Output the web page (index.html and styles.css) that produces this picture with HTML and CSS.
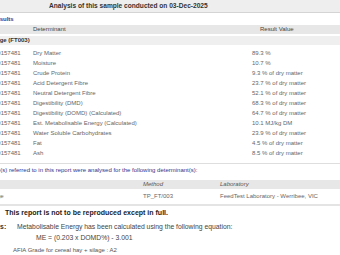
FILE: index.html
```html
<!DOCTYPE html>
<html>
<head>
<meta charset="utf-8">
<link rel="stylesheet" href="styles.css">
</head>
<body>
<div class="page">
  <div class="topbar">Analysis of this sample conducted on 03-Dec-2025</div>
  <div class="title">Results</div>
  <table class="results">
    <colgroup><col class="c-id"><col class="c-det"><col class="c-val"></colgroup>
    <thead>
      <tr><th></th><th>Determinant</th><th class="h-val">Result Value</th></tr>
    </thead>
    <tbody>
      <tr class="group"><td colspan="3">Silage (FT003)</td></tr>
      <tr><td>20157481</td><td>Dry Matter</td><td>89.3 %</td></tr>
      <tr><td>20157481</td><td>Moisture</td><td>10.7 %</td></tr>
      <tr><td>20157481</td><td>Crude Protein</td><td>9.3 % of dry matter</td></tr>
      <tr><td>20157481</td><td>Acid Detergent Fibre</td><td>23.7 % of dry matter</td></tr>
      <tr><td>20157481</td><td>Neutral Detergent Fibre</td><td>52.1 % of dry matter</td></tr>
      <tr><td>20157481</td><td>Digestibility (DMD)</td><td>68.3 % of dry matter</td></tr>
      <tr><td>20157481</td><td>Digestibility (DOMD) (Calculated)</td><td>64.7 % of dry matter</td></tr>
      <tr><td>20157481</td><td>Est. Metabolisable Energy (Calculated)</td><td>10.1 MJ/kg DM</td></tr>
      <tr><td>20157481</td><td>Water Soluble Carbohydrates</td><td>23.9 % of dry matter</td></tr>
      <tr><td>20157481</td><td>Fat</td><td>4.5 % of dry matter</td></tr>
      <tr><td>20157481</td><td>Ash</td><td>8.5 % of dry matter</td></tr>
    </tbody>
  </table>
  <div class="sep"></div>
  <p class="intro">Sample(s) referred to in this report were analysed for the following determinant(s):</p>
  <table class="methods">
    <colgroup><col class="m-name"><col class="m-method"><col class="m-lab"></colgroup>
    <thead>
      <tr><th></th><th>Method</th><th>Laboratory</th></tr>
    </thead>
    <tbody>
      <tr><td>Silage</td><td>TP_FT/003</td><td>FeedTest Laboratory - Werribee, VIC</td></tr>
    </tbody>
  </table>
  <p class="disclaimer">This report is not to be reproduced except in full.</p>
  <div class="notes">
    <div class="notes-label">Notes:</div>
    <div class="notes-body">
      <div>Metabolisable Energy has been calculated using the following equation:</div>
      <div class="eq">ME = (0.203 x DOMD%) - 3.001</div>
    </div>
  </div>
  <p class="grade">AFIA Grade for cereal hay + silage : A2</p>
</div>
</body>
</html>
```

FILE: styles.css
```css
html, body {
  margin: 0;
  padding: 0;
}
body {
  font-family: "Liberation Sans", Arial, sans-serif;
  background: #ffffff;
  color: #555;
  width: 340px;
  height: 255px;
  overflow: hidden;
}
.page {
  width: 340px;
}
.topbar {
  height: 12px;
  line-height: 12px;
  background: #eeeeee;
  border-bottom: 1px solid #d4d4d4;
  font-size: 6.6px;
  font-weight: bold;
  color: #333;
  padding-left: 49px;
  white-space: nowrap;
}
.title {
  margin-left: -8px;
  font-size: 6px;
  font-weight: bold;
  line-height: 12px;
  color: #3b3b8e;
}
.results {
  border-collapse: separate;
  border-spacing: 0;
  margin-left: -6px;
  width: 346px;
  font-size: 6px;
  table-layout: fixed;
}
.c-id { width: 39px; }
.c-det { width: 219px; }
.c-val { width: 88px; }
.results th {
  background: #e7e7e7;
  height: 9px;
  line-height: 9px;
  padding: 0;
  font-weight: normal;
  color: #444;
  text-align: left;
}
.results th.h-val {
  padding-left: 8px;
}
.results td {
  padding: 0;
  height: 10px;
  line-height: 10px;
  color: #666;
  white-space: nowrap;
}
.results tr.group td {
  background: #efefef;
  height: 9px;
  line-height: 9px;
  border-top: 2px solid #fff;
  border-bottom: 3px solid #fff;
  font-weight: bold;
  color: #333;
  text-indent: -5px;
}
.sep {
  margin-top: 5px;
  border-top: 1px solid #dedede;
}
.intro {
  margin: 0 0 5px -20px;
  padding-top: 1px;
  font-size: 6px;
  line-height: 10px;
  color: #34348a;
  white-space: nowrap;
}
.methods {
  border-collapse: separate;
  border-spacing: 0;
  margin-left: -13px;
  width: 353px;
  font-size: 6px;
  table-layout: fixed;
}
.m-name { width: 156px; }
.m-method { width: 77px; }
.m-lab { width: 120px; }
.methods th {
  background: #e7e7e7;
  height: 9px;
  line-height: 9px;
  padding: 0;
  font-weight: normal;
  font-style: italic;
  color: #555;
  text-align: left;
}
.methods td {
  padding: 0;
  height: 15px;
  line-height: 15px;
  color: #666;
  border-bottom: 2px solid #e4e4e4;
  white-space: nowrap;
}
.disclaimer {
  margin: 2px 0 0 0;
  padding-left: 5px;
  font-size: 7px;
  font-weight: bold;
  line-height: 10px;
  color: #222;
  white-space: nowrap;
}
.notes {
  display: flex;
  margin-top: 3px;
  margin-left: -15px;
}
.notes-label {
  width: 32px;
  flex: none;
  font-size: 6.8px;
  font-weight: bold;
  line-height: 11px;
  color: #333;
}
.notes-body {
  font-size: 6.8px;
  line-height: 11px;
  color: #444;
  white-space: nowrap;
}
.eq {
  padding-left: 19px;
}
.grade {
  margin: 2px 0 0 0;
  padding-left: 13px;
  font-size: 6px;
  line-height: 10px;
  color: #555;
  white-space: nowrap;
}
```
